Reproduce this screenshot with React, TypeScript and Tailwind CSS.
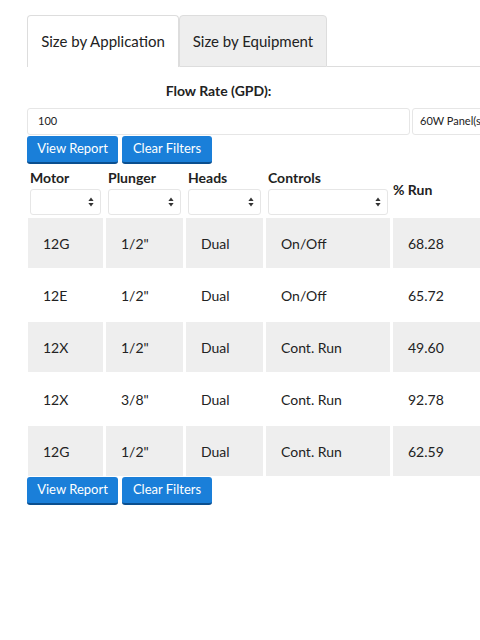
const rows = [
  { motor: "12G", plunger: '1/2"', heads: "Dual", controls: "On/Off", run: "68.28" },
  { motor: "12E", plunger: '1/2"', heads: "Dual", controls: "On/Off", run: "65.72" },
  { motor: "12X", plunger: '1/2"', heads: "Dual", controls: "Cont. Run", run: "49.60" },
  { motor: "12X", plunger: '3/8"', heads: "Dual", controls: "Cont. Run", run: "92.78" },
  { motor: "12G", plunger: '1/2"', heads: "Dual", controls: "Cont. Run", run: "62.59" },
];

const cols = "grid grid-cols-[75px_77px_77px_124px_90px] gap-x-[3px]";

function Buttons() {
  return (
    <div className="flex gap-1">
      <button className="h-[28px] w-[91px] rounded-[3px] bg-[#1a7fd9] border-b-2 border-[#0b4f8f] text-white text-[13px]">
        View Report
      </button>
      <button className="h-[28px] w-[90px] rounded-[3px] bg-[#1a7fd9] border-b-2 border-[#0b4f8f] text-white text-[13px]">
        Clear Filters
      </button>
    </div>
  );
}

function FilterSelect() {
  return (
    <div className="mx-[2px] h-[26px] rounded-[3px] border border-[#e6e6e6] bg-white flex items-center justify-end pr-[6px]">
      <svg width="6" height="10" viewBox="0 0 6 10" className="text-[#333]">
        <path d="M3 0.5 L5.6 4 H0.4 Z" fill="currentColor" />
        <path d="M3 9.5 L5.6 6 H0.4 Z" fill="currentColor" />
      </svg>
    </div>
  );
}

export default function App() {
  return (
    <div className="w-[480px] h-[640px] overflow-hidden bg-white text-[#222] font-['Lato','Open_Sans',sans-serif]">
      {/* Tabs */}
      <div className="pt-[15px] flex items-end">
        <div className="w-[27px] shrink-0" />
        <div className="h-[52px] w-[152px] rounded-t-[4px] border border-b-0 border-[#ddd] bg-white flex items-center justify-center text-[15px]">
          Size by Application
        </div>
        <div className="h-[52px] w-[148px] rounded-t-[4px] border border-[#ddd] bg-[#eee] flex items-center justify-center text-[15px]">
          Size by Equipment
        </div>
        <div className="flex-1 border-b border-[#ddd]" />
      </div>

      <div className="pl-[27px]">
        <div className="pt-[14px] w-[383px] text-center font-bold text-[14px] leading-[20px]">
          Flow Rate (GPD):
        </div>
        <div className="mt-[7px] flex gap-[2px]">
          <div className="h-[27px] w-[383px] shrink-0 rounded-[3px] border border-[#e6e6e6] px-[10px] flex items-center text-[11px]">
            100
          </div>
          <div className="h-[27px] w-[100px] shrink-0 rounded-[3px] border border-[#e6e6e6] px-[7px] flex items-center text-[11px] whitespace-nowrap">
            60W Panel(s)
          </div>
        </div>
        <div className="mt-[1px]">
          <Buttons />
        </div>

        {/* Table */}
        <div className="mt-[3px] ml-[1px]">
          <div className={cols}>
            {["Motor", "Plunger", "Heads", "Controls"].map((h) => (
              <div key={h} className="flex flex-col">
                <div className="px-[2px] font-bold text-[14px] leading-[22px]">{h}</div>
                <FilterSelect />
              </div>
            ))}
            <div className="flex items-center pb-[3px] font-bold text-[14px]">% Run</div>
          </div>
          <div className="mt-[3px] flex flex-col gap-y-[2px]">
            {rows.map((r, i) => (
              <div key={i} className={cols}>
                {[r.motor, r.plunger, r.heads, r.controls, r.run].map((c, j) => (
                  <div
                    key={j}
                    className={`h-[50px] flex items-center pl-[15px] text-[14px] ${i % 2 === 0 ? "bg-[#eee]" : "bg-white"}`}
                  >
                    {c}
                  </div>
                ))}
              </div>
            ))}
          </div>
        </div>
        <div className="mt-[1px]">
          <Buttons />
        </div>
      </div>
    </div>
  );
}
